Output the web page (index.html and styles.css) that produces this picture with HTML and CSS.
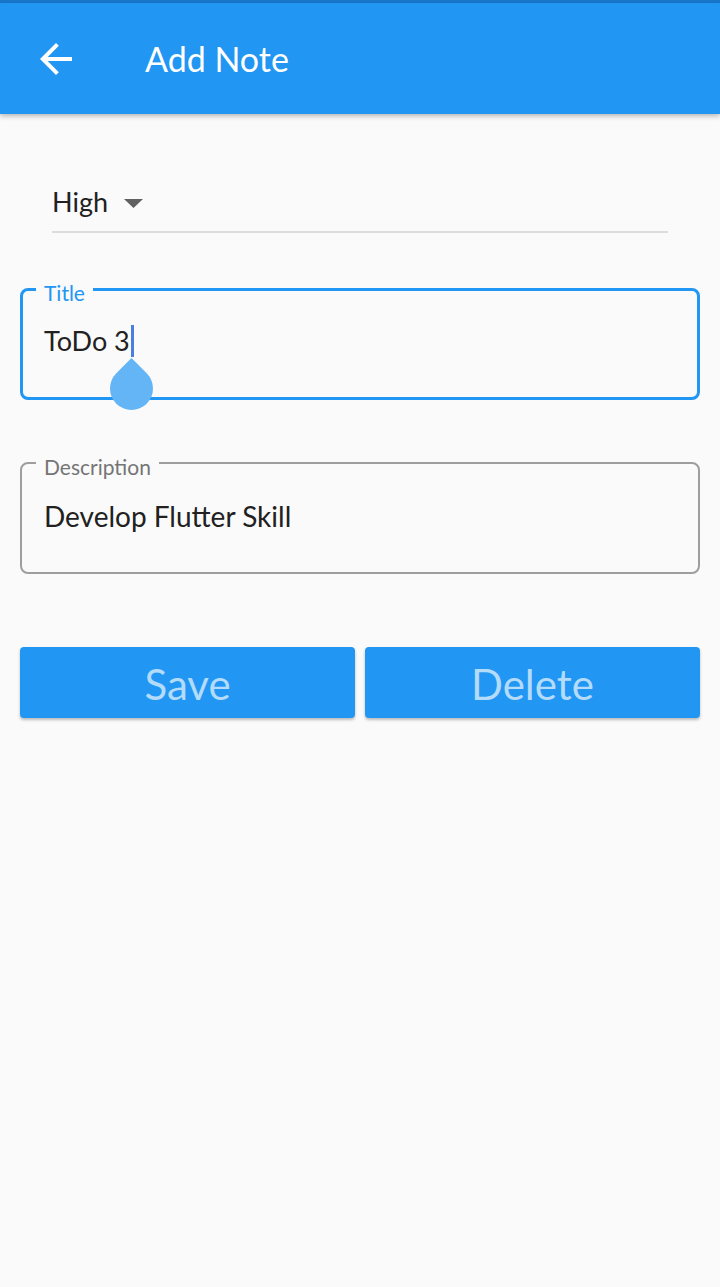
FILE: index.html
```html
<!DOCTYPE html>
<html>
<head>
<meta charset="utf-8">
<link rel="stylesheet" href="styles.css">
</head>
<body>
<div class="status"></div>
<header class="appbar">
  <svg class="back" width="48" height="48" viewBox="0 0 24 24"><path fill="#fff" d="M20 11H7.83l5.59-5.59L12 4l-8 8 8 8 1.41-1.41L7.83 13H20v-2z"/></svg>
  <h1 class="title">Add Note</h1>
</header>
<main class="content">
  <div class="dropdown">
    <span class="dd-text">High</span>
    <svg class="dd-arrow" width="19" height="9" viewBox="0 0 19 9"><path d="M0 0h19L9.5 9z" fill="#616161"/></svg>
  </div>
  <div class="field focused">
    <span class="label">Title</span>
    <div class="value">ToDo 3<span class="cursor"><span class="handle"></span></span></div>
  </div>
  <div class="field normal">
    <span class="label">Description</span>
    <div class="value">Develop Flutter Skill</div>
  </div>
  <div class="buttons">
    <button class="btn">Save</button>
    <button class="btn">Delete</button>
  </div>
</main>
</body>
</html>
```
FILE: styles.css
```css
* { box-sizing: border-box; }
html, body { margin: 0; padding: 0; }
body {
  background: #FAFAFA;
  font-family: Lato, "Noto Sans", sans-serif;
  width: 720px;
  height: 1287px;
  overflow: hidden;
}
.status { height: 3px; background: #1A78CC; }
.appbar {
  height: 111px;
  background: #2196F3;
  display: flex;
  align-items: center;
  box-shadow: 0 2px 5px rgba(0,0,0,0.28);
  position: relative;
  z-index: 1;
}
.back { margin-left: 32px; flex: none; }
.title {
  margin: 2px 0 0 65px;
  font-size: 34px;
  font-weight: 400;
  line-height: 1.2;
  color: #fff;
}
.content { padding: 0 20px; }
.dropdown {
  margin: 72px 32px 0;
  padding-bottom: 13px;
  border-bottom: 2px solid #DCDCDC;
  display: flex;
  align-items: center;
  font-size: 27px;
  line-height: 1.2;
  color: #212121;
}
.dd-arrow { margin-left: 16px; margin-top: 2px; }
.field {
  position: relative;
  height: 112px;
  border-radius: 8px;
}
.field.focused {
  margin-top: 55px;
  border: 3px solid #2196F3;
  padding: 33.5px 0 0 21px;
}
.field.normal {
  margin-top: 62px;
  border: 2px solid #9E9E9E;
  padding: 35.5px 0 0 22px;
}
.label {
  position: absolute;
  left: 13px;
  top: -11.5px;
  padding: 0 8px;
  background: #FAFAFA;
  font-size: 21px;
  line-height: 1.2;
}
.normal .label { left: 14px; top: -10.5px; color: #757575; }
.focused .label { color: #2196F3; }
.value {
  font-size: 28px;
  line-height: 1.2;
  color: #212121;
}
.focused .value { font-size: 27px; }
.cursor {
  display: inline-block;
  position: relative;
  width: 3px;
  height: 32px;
  margin-left: 1px;
  background: #4A7FE0;
  vertical-align: -6px;
}
.handle {
  position: absolute;
  left: -21px;
  top: 42px;
  width: 43px;
  height: 43px;
  background: #64B5F6;
  border-radius: 0 50% 50% 50%;
  transform: rotate(45deg);
  z-index: 2;
}
.buttons {
  margin-top: 73px;
  display: flex;
  gap: 10px;
}
.btn {
  flex: 1;
  height: 71px;
  border: none;
  border-radius: 4px;
  background: #2196F3;
  color: #B3DBFB;
  font-family: Lato, "Noto Sans", sans-serif;
  font-size: 42px;
  line-height: 1.2;
  padding: 2px 0 0 0;
  box-shadow: 0 2px 3px rgba(0,0,0,0.25);
}
```
